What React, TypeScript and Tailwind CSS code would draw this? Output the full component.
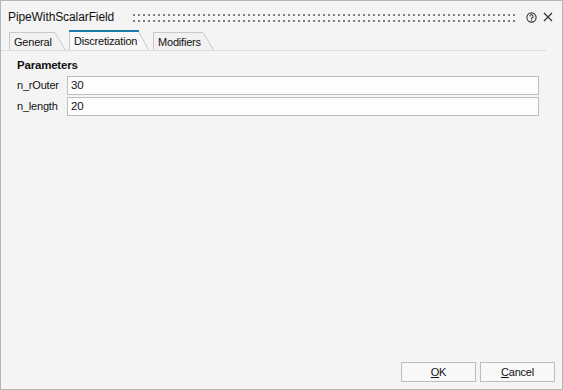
import React from 'react'

function Grip() {
  return (
    <svg className="block h-[10px] w-full" shapeRendering="crispEdges" aria-hidden>
      <defs>
        <pattern id="grip" width="5" height="10" patternUnits="userSpaceOnUse">
          <rect x="1" y="1" width="2" height="2" fill="#808080" />
          <rect x="1" y="7" width="2" height="2" fill="#808080" />
        </pattern>
      </defs>
      <rect width="100%" height="10" fill="url(#grip)" />
    </svg>
  )
}

interface TabProps {
  label: string
  width: number
  active?: boolean
  className?: string
}

function Tab({ label, width, active, className }: TabProps) {
  const h = active ? 20 : 18
  return (
    <div className={`relative shrink-0 ${className ?? ''}`} style={{ width, height: h }}>
      <svg className="absolute inset-0" width={width} height={h} aria-hidden>
        <path
          d={`M0.5 ${h} V0.5 H${width - 11} L${width - 0.5} ${h}`}
          fill={active ? '#f7f7f7' : '#f2f2f2'}
          stroke="#c9c9c9"
        />
        {active && <path d={`M0 1 H${width - 10}`} stroke="#1a7fa8" strokeWidth="2" />}
      </svg>
      <span className={`absolute left-[5px] ${active ? 'top-[4px]' : 'top-[3px]'} leading-[14px]`}>{label}</span>
    </div>
  )
}

function Field({ label, value }: { label: string; value: string }) {
  return (
    <div className="flex items-center h-[19px]">
      <span className="w-[50px] shrink-0">{label}</span>
      <div className="h-[19px] w-[472px] border border-[#bdbdbd] bg-[#fdfdfd] pl-[3px] leading-[17px] text-[11.5px]">{value}</div>
    </div>
  )
}

export default function App() {
  return (
    <div className="w-[563px] h-[390px] border border-[#b4b4b4] bg-[#f4f4f4] flex flex-col text-[11px] tracking-[-0.2px] text-[#111] font-['Liberation_Sans',Arial,sans-serif]">
      <div className="flex items-center h-[30px] pl-[7px] pr-[9px] pt-[2px]">
        <span className="text-[12px] tracking-[-0.1px]">PipeWithScalarField</span>
        <div className="flex-1 ml-[18px] mr-[9px] pt-[1px]">
          <Grip />
        </div>
        <svg width="11" height="11" viewBox="0 0 11 11" className="mr-[6px]" aria-hidden>
          <circle cx="5.5" cy="5.5" r="4.6" fill="none" stroke="#333" strokeWidth="1.1" />
          <path d="M3.9 4.4 A1.6 1.6 0 1 1 5.9 5.9 Q5.5 6.2 5.5 6.9" fill="none" stroke="#333" strokeWidth="1.1" />
          <rect x="5" y="7.6" width="1.1" height="1.1" fill="#333" />
        </svg>
        <svg width="10" height="10" viewBox="0 0 10 10" aria-hidden>
          <path d="M1 1 L9 9 M9 1 L1 9" stroke="#333" strokeWidth="1.2" />
        </svg>
      </div>

      <div className="flex items-end h-[20px] pl-[8px] mr-[16px] border-b border-[#dcdcdc]">
        <Tab label="General" width={57} />
        <Tab label="Discretization" width={80} active className="ml-[3px]" />
        <Tab label="Modifiers" width={61} className="ml-[4px]" />
      </div>

      <div className="flex flex-col pl-[16px] pt-[7px]">
        <span className="font-bold leading-[14px] text-[11.5px]">Parameters</span>
        <div className="flex flex-col gap-[2px] mt-[4px]">
          <Field label="n_rOuter" value="30" />
          <Field label="n_length" value="20" />
        </div>
      </div>

      <div className="mt-auto flex justify-end gap-[4px] pr-[7px] pb-[7px]">
        <button className="w-[75px] h-[20px] border border-[#bdbdbd] bg-[#f8f8f8] leading-[18px]">
          <span className="underline">O</span>K
        </button>
        <button className="w-[75px] h-[20px] border border-[#bdbdbd] bg-[#f8f8f8] leading-[18px]">
          <span className="underline">C</span>ancel
        </button>
      </div>
    </div>
  )
}
